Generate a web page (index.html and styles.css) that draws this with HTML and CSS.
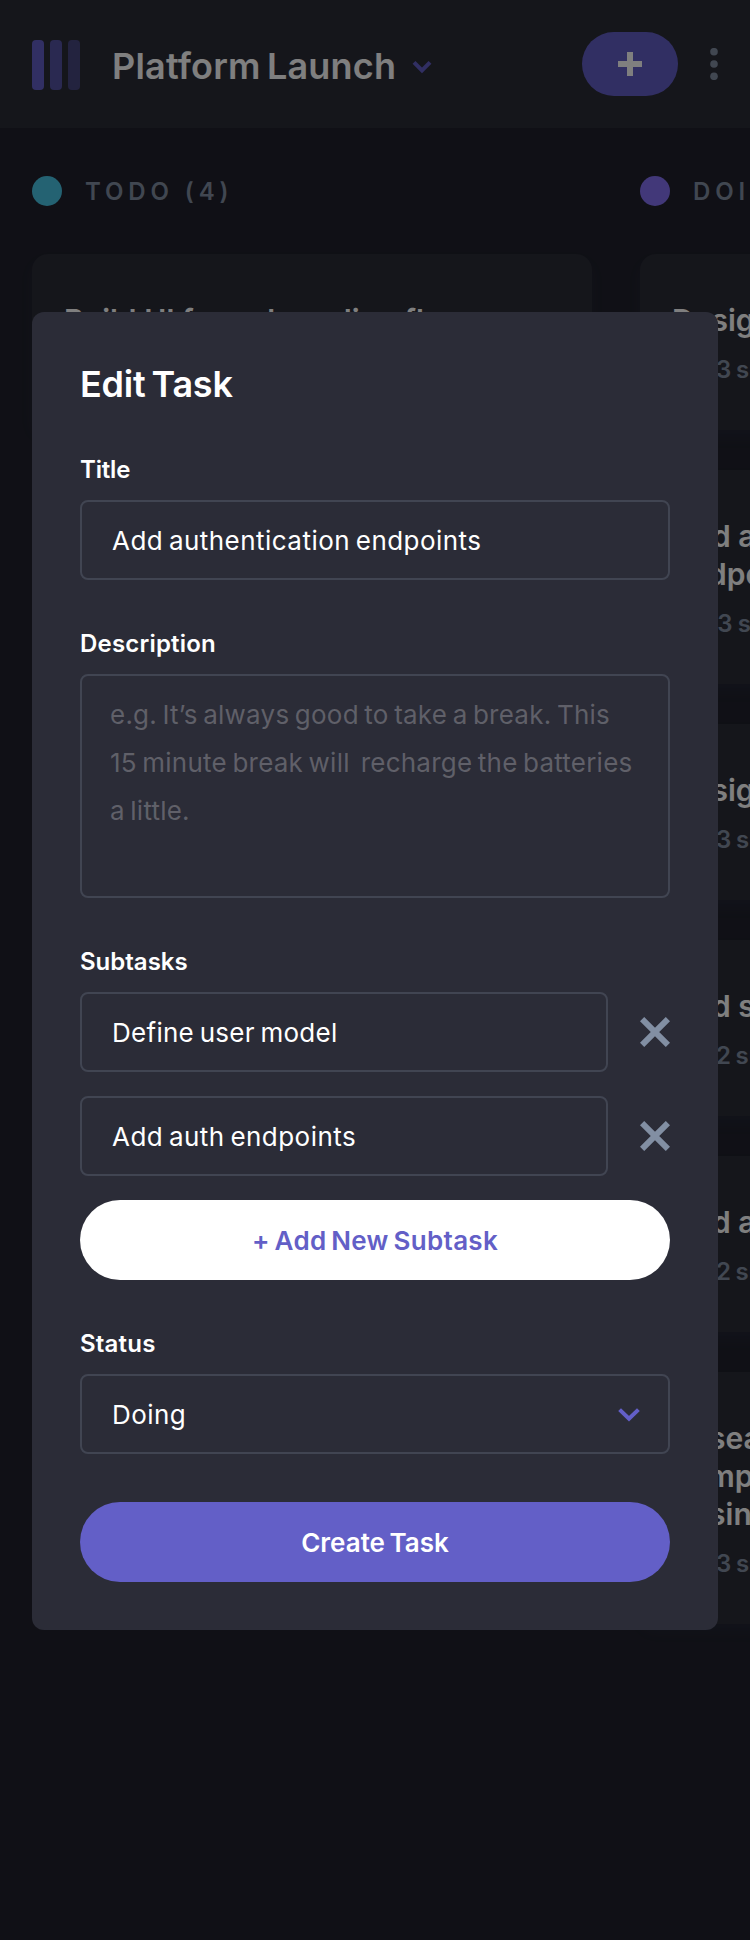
FILE: index.html
```html
<!DOCTYPE html>
<html lang="en">
<head>
<meta charset="utf-8">
<title>Kanban – Edit Task</title>
<link rel="stylesheet" href="styles.css">
</head>
<body>
<div class="app">
  <header class="header">
    <svg class="logo" width="48" height="50" viewBox="0 0 48 50" fill="#635fc7"><rect width="12" height="50" rx="4"/><rect x="18" width="12" height="50" rx="4" opacity=".75"/><rect x="36" width="12" height="50" rx="4" opacity=".5"/></svg>
    <h1 class="board-name">Platform Launch</h1>
    <svg class="chevron" width="20" height="14" viewBox="0 0 20 14" fill="none" stroke="#635fc7" stroke-width="4"><path d="M2 2.4l8 8 8-8"/></svg>
    <button class="add" aria-label="Add task"><svg width="24" height="24" viewBox="0 0 24 24" fill="#fff"><path d="M9 0h6v9h9v6h-9v9H9v-9H0V9h9z"/></svg></button>
    <svg class="more" width="8" height="32" viewBox="0 0 8 32" fill="#828fa3"><circle cx="4" cy="3.7" r="3.8"/><circle cx="4" cy="16" r="3.8"/><circle cx="4" cy="28.3" r="3.8"/></svg>
  </header>
  <main class="board">
    <section class="column">
      <h2 class="column-title"><i class="dot dot-todo"></i>TODO (4)</h2>
      <article class="card"><h3>Build UI for onboarding flow</h3></article>
    </section>
    <section class="column">
      <h2 class="column-title"><i class="dot dot-doing"></i>DOING (6)</h2>
      <article class="card"><h3>Design settings and search pages</h3><p><span>0 of</span> 3 subtasks</p></article>
      <article class="card"><h3>Add account management<br>endpoints</h3><p class="started">1 of 3 subtasks</p></article>
      <article class="card"><h3>Design onboarding flow</h3><p><span>0 of</span> 3 subtasks</p></article>
      <article class="card"><h3>Add search functionality</h3><p><span>0 of</span> 2 subtasks</p></article>
      <article class="card"><h3>Add authentication endpoints</h3><p><span>0 of</span> 2 subtasks</p></article>
      <article class="card"><h3>Research pricing points of various<br>competitors and trial different<br>business models</h3><p><span>0 of</span> 3 subtasks</p></article>
    </section>
  </main>
</div>
<div class="overlay">
  <form class="modal">
    <h2 class="modal-title">Edit Task</h2>
    <label class="label label-title">Title</label>
    <div class="field">Add authentication endpoints</div>
    <label class="label label-wide">Description</label>
    <div class="field area">e.g. It’s always good to take a break. This<br>15 minute break will&nbsp; recharge the batteries<br>a little.</div>
    <label class="label">Subtasks</label>
    <div class="row"><div class="field field-snug">Define user model</div><svg width="30" height="30" viewBox="0 0 30 30" stroke="#828fa3" stroke-width="6"><path d="M2.1 2.1l25.8 25.8M27.9 2.1L2.1 27.9"/></svg></div>
    <div class="row"><div class="field">Add auth endpoints</div><svg width="30" height="30" viewBox="0 0 30 30" stroke="#828fa3" stroke-width="6"><path d="M2.1 2.1l25.8 25.8M27.9 2.1L2.1 27.9"/></svg></div>
    <button type="button" class="button secondary">+ Add New Subtask</button>
    <label class="label label-wide">Status</label>
    <div class="field select">Doing<svg width="22" height="14" viewBox="0 0 22 14" fill="none" stroke="#635fc7" stroke-width="4"><path d="M1.6 1.6l9.4 9.2 9.4-9.2"/></svg></div>
    <button type="button" class="button primary">Create Task</button>
  </form>
</div>
</body>
</html>
```
FILE: styles.css
```css
* { box-sizing: border-box; }
body { margin: 0; width: 750px; height: 1940px; overflow: hidden; position: relative; background: #20212c; color: #fff; font-family: Inter, "Liberation Sans", sans-serif; }
h1, h2, h3, p { margin: 0; }
button { border: 0; padding: 0; font: inherit; }
svg { display: block; flex: none; }
.app { width: 750px; height: 1940px; overflow: hidden; }
.header { height: 128px; background: #2b2c37; display: flex; align-items: center; padding: 0 32px; }
.logo { margin-top: 2px; }
.board-name { margin: 4px 0 0 32px; width: 285px; font-size: 36px; line-height: 46px; font-weight: 600; letter-spacing: .2px; word-spacing: -3px; white-space: nowrap; }
.chevron { margin: 6px 0 0 14.5px; }
.add { width: 96px; height: 64px; margin-left: auto; border-radius: 32px; background: #635fc7; display: flex; align-items: center; justify-content: center; }
.more { margin-left: 32px; }
.board { display: flex; gap: 48px; padding: 48px 32px; }
.column { width: 560px; flex: none; display: flex; flex-direction: column; gap: 40px; }
.column-title { display: flex; align-items: center; gap: 23px; height: 30px; margin-bottom: 8px; color: #828fa3; font-size: 24px; font-weight: 600; letter-spacing: 4.9px; }
.dot { width: 30px; height: 30px; border-radius: 50%; }
.dot-todo { background: #49c4e5; }
.dot-doing { background: #8471f2; }
.card { min-height: 176px; background: #2b2c37; border-radius: 16px; padding: 47px 32px 45px; box-shadow: 0 8px 12px rgba(54, 78, 126, .1); }
.card h3 { font-size: 30px; line-height: 38px; font-weight: 600; white-space: nowrap; }
.card p { margin-top: 16px; color: #828fa3; font-size: 24px; line-height: 30px; font-weight: 600; word-spacing: -1.5px; white-space: nowrap; }
.card p span { letter-spacing: -1.2px; }
.card .started { letter-spacing: .4px; }
.overlay { position: absolute; inset: 0; background: rgba(0, 0, 0, .5); padding: 312px 32px 0; }
.modal { width: 686px; height: 1318px; background: #2b2c37; border-radius: 12px; padding: 48px; }
.modal-title { padding-top: 1px; font-size: 36px; line-height: 46px; font-weight: 600; letter-spacing: -.2px; word-spacing: -3px; margin-bottom: 47px; }
.label { display: block; height: 30px; line-height: 32px; font-size: 24px; font-weight: 600; margin-bottom: 16px; }
.label-title { letter-spacing: -.2px; }
.label-wide { letter-spacing: .2px; }
.field { height: 80px; border: 2px solid rgba(130, 143, 163, .25); border-radius: 8px; padding: 1px 30px 0; font-size: 26px; line-height: 76px; letter-spacing: .46px; word-spacing: -2px; white-space: nowrap; margin-bottom: 48px; }
.field-snug { letter-spacing: .28px; }
.area { height: 224px; padding: 15px 28px 0; line-height: 48px; letter-spacing: .22px; color: rgba(255, 255, 255, .25); }
.row { display: flex; align-items: center; justify-content: space-between; margin-bottom: 24px; }
.row .field { width: 528px; margin: 0; }
.select { display: flex; align-items: center; justify-content: space-between; padding-right: 28px; }
.button { display: block; width: 100%; height: 80px; border-radius: 40px; font-size: 26px; font-weight: 600; }
.secondary { background: #fff; color: #635fc7; margin-bottom: 48px; letter-spacing: .3px; word-spacing: -2px; }
.primary { background: #635fc7; color: #fff; word-spacing: -2px; }
```
